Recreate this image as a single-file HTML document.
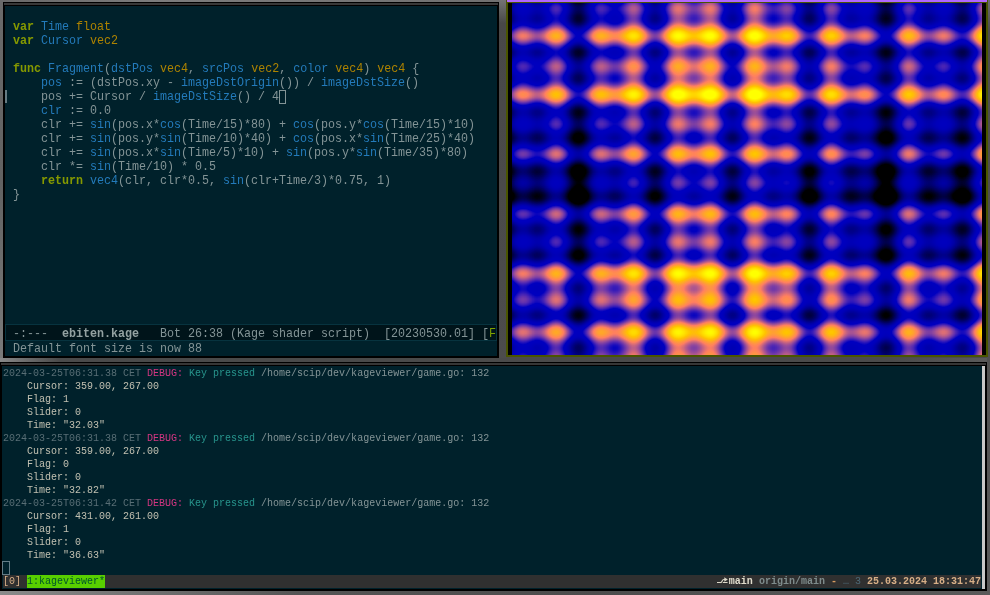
<!DOCTYPE html>
<html><head><meta charset="utf-8"><title>kageviewer</title>
<style>
html,body{margin:0;padding:0;}
body{width:990px;height:595px;overflow:hidden;position:relative;background:#4a4a4a;font-family:"Liberation Mono",monospace;}
.abs{position:absolute;}
#wall-top{left:0;top:0;width:506px;height:3px;background:linear-gradient(90deg,#686868,#7c7c7c 30%,#707070);}
#wall-left{left:0;top:0;width:4px;height:362px;background:linear-gradient(180deg,#6a6a6a,#626262 50%,#7a7a7a);}
#wall-mid{left:499px;top:0;width:7px;height:358px;background:linear-gradient(180deg,#747474,#484848 6.5%,#4c4c4c);}
#wall-gap{left:0;top:358px;width:990px;height:4px;background:linear-gradient(90deg,#888,#4a4a4a 6%,#4a4a4a 90%,#5a5a5a);}
#wall-right{left:987px;top:0;width:3px;height:595px;background:linear-gradient(180deg,#6c6c6c,#4c4c4c 5%,#505050 60%,#5a5a5a);}
#wall-bot{left:0;top:591px;width:990px;height:4px;background:linear-gradient(90deg,#8a8a8a,#555 30%,#4c4c4c 60%,#5a5a5a);}

/* editor window */
#ed{left:3px;top:2px;width:496px;height:356px;background:#000;}
#ed .stripe{left:1px;top:1px;width:494px;height:2px;background:#383838;}
#ed .body{left:2px;top:4px;width:492px;height:350px;background:#00212b;overflow:hidden;}
.code{position:absolute;left:8px;top:14px;font-size:13px;line-height:14px;transform:scaleX(0.89744);transform-origin:0 0;color:#839496;white-space:pre;}
.k{color:#859900;font-weight:bold;}
.f{color:#237bbb;}
.t{color:#ad8300;}
.fringe{left:0px;top:84px;width:2px;height:13px;background:#657b83;}
.cur{left:274px;top:84px;width:5px;height:12px;border:1px solid #839496;}
.ml{left:0;top:318px;width:490px;height:15px;background:#00141a;border:1px solid #07333f;}
.ml span.tx{position:absolute;left:7px;top:2px;font-size:13px;line-height:14px;transform:scaleX(0.89744);transform-origin:0 0;color:#839496;white-space:pre;}
.ml b{color:#93a1a1;}
.echo{left:8px;top:336px;font-size:13px;line-height:14px;transform:scaleX(0.89744);transform-origin:0 0;color:#839496;white-space:pre;}

/* viewer window */
#vw{left:506px;top:0;width:482px;height:357px;background:#4a5500;}
#vw .title{left:1px;top:0;width:480px;height:2px;background:#b266ff;}
#vw .body{left:2px;top:3px;width:478px;height:352px;background:#000;}
svg.shader{position:absolute;left:4px;top:0;display:block;}

/* terminal */
#tm{left:0;top:362px;width:987px;height:229px;background:#000;}
#tm .stripe{left:1px;top:1px;width:985px;height:2px;background:#363636;}
#tm .body{left:2px;top:4px;width:980px;height:223px;background:#00212b;overflow:hidden;}
.term,.status .l,.status .win,.status .r{opacity:0.999;}
#tm .sb{left:982px;top:4px;width:3px;height:223px;background:#c8c8c8;}
.term{position:absolute;left:1px;top:1px;font-size:10px;line-height:13px;color:#c1c0b1;white-space:pre;}
.d{color:#586e75;}
.m{color:#d33682;}
.c{color:#27958d;}
.p{color:#839496;}
.tcur{left:0px;top:195px;width:6px;height:12px;border:1px solid #647c86;}
.status{left:1px;top:209px;width:978px;height:13px;background:#303030;font-size:10px;line-height:13px;white-space:pre;color:#d7af87;}
.status .win{position:absolute;left:24px;top:0;background:#58cf00;color:#00552a;}
.status .l{position:absolute;left:0;top:0;}
.status .r{position:absolute;right:0;top:0;font-weight:bold;}
.w{color:#e0dccc;}
.g{color:#7f8c8c;}
.o{color:#d79a5f;}
.z{color:#4e6a78;font-weight:normal;}
</style></head><body>
<div class="abs" id="wall-top"></div><div class="abs" id="wall-left"></div><div class="abs" id="wall-mid"></div><div class="abs" id="wall-gap"></div><div class="abs" id="wall-right"></div><div class="abs" id="wall-bot"></div>

<div class="abs" id="ed"><div class="abs stripe"></div><div class="abs body">
<div class="code"><span class="k">var</span> <span class="f">Time</span> <span class="t">float</span>
<span class="k">var</span> <span class="f">Cursor</span> <span class="t">vec2</span>

<span class="k">func</span> <span class="f">Fragment</span>(<span class="f">dstPos</span> <span class="t">vec4</span>, <span class="f">srcPos</span> <span class="t">vec2</span>, <span class="f">color</span> <span class="t">vec4</span>) <span class="t">vec4</span> {
    <span class="f">pos</span> := (dstPos.xy - <span class="f">imageDstOrigin</span>()) / <span class="f">imageDstSize</span>()
    pos += Cursor / <span class="f">imageDstSize</span>() / 4
    <span class="f">clr</span> := 0.0
    clr += <span class="f">sin</span>(pos.x*<span class="f">cos</span>(Time/15)*80) + <span class="f">cos</span>(pos.y*<span class="f">cos</span>(Time/15)*10)
    clr += <span class="f">sin</span>(pos.y*<span class="f">sin</span>(Time/10)*40) + <span class="f">cos</span>(pos.x*<span class="f">sin</span>(Time/25)*40)
    clr += <span class="f">sin</span>(pos.x*<span class="f">sin</span>(Time/5)*10) + <span class="f">sin</span>(pos.y*<span class="f">sin</span>(Time/35)*80)
    clr *= <span class="f">sin</span>(Time/10) * 0.5
    <span class="k">return</span> <span class="f">vec4</span>(clr, clr*0.5, <span class="f">sin</span>(clr+Time/3)*0.75, 1)
}</div>
<div class="abs fringe"></div><div class="abs cur"></div>
<div class="abs ml"><span class="tx">-:---  <b>ebiten.kage</b>   Bot 26:38 (Kage shader script)  [20230530.01] [<span style="color:#7fa300">F</span></span></div>
<div class="abs echo">Default font size is now 88</div>
</div></div>

<div class="abs" id="vw"><div class="abs title"></div><div class="abs body"><svg class="shader" width="470" height="352" viewBox="0 0 470 352" shape-rendering="crispEdges"><defs><filter id="kage" x="0" y="0" width="100%" height="100%" color-interpolation-filters="sRGB"><feColorMatrix type="matrix" values="-2.69163 -2.69163 0.00000 0.00000 2.69163 -1.34581 -1.34581 0.00000 0.00000 1.34581 -0.48065 -0.48065 0.00000 0.00000 0.98065 0.00000 0.00000 0.00000 0.00000 1.00000"/><feComponentTransfer><feFuncB type="table" tableValues="0 0 0 0 0 0 0 0 0 0 0 0 0 0 0 0 0 0 0 0 0 0 0 0 0 0 0 0 0 0 0 0 0 0 0 0 0 0 0 0 0 0 0 0 0 0 0 0 0 0 0 0 0 0 0.002 0.019 0.035 0.052 0.068 0.084 0.101 0.117 0.133 0.149 0.165 0.181 0.197 0.213 0.229 0.245 0.26 0.276 0.291 0.306 0.321 0.336 0.35 0.365 0.379 0.393 0.407 0.421 0.434 0.448 0.461 0.474 0.486 0.499 0.511 0.523 0.535 0.546 0.557 0.568 0.579 0.589 0.599 0.609 0.618 0.627 0.636 0.645 0.653 0.661 0.669 0.676 0.683 0.69 0.696 0.702 0.708 0.713 0.718 0.722 0.727 0.731 0.734 0.737 0.74 0.743 0.745 0.747 0.748 0.749 0.75 0.75 0.75 0.75 0.749 0.748 0.746 0.744 0.742 0.74 0.737 0.733 0.73 0.726 0.721 0.717 0.712 0.706 0.701 0.695 0.688 0.682 0.675 0.667 0.659 0.651 0.643 0.635 0.626 0.616 0.607 0.597 0.587 0.577 0.566 0.555 0.544 0.532 0.52 0.508 0.496 0.484 0.471 0.458 0.445 0.432 0.418 0.404 0.39 0.376 0.362 0.347 0.333 0.318 0.303 0.288 0.272 0.257 0.241 0.226 0.21 0.194 0.178 0.162 0.146 0.13 0.114 0.097 0.081 0.065 0.048 0.032 0.015 0 0 0 0 0 0 0 0 0 0 0 0 0 0 0 0 0 0 0 0 0 0 0 0 0 0 0 0 0 0 0 0 0 0 0 0 0 0 0 0 0 0 0 0 0 0 0 0 0 0 0 0 0 0 0 0 0 0 0"/></feComponentTransfer></filter></defs><g filter="url(#kage)"><rect width="470" height="352" fill="#000"/><g><rect x="0" width="1" height="352" fill="#c00000"/><rect x="1" width="1" height="352" fill="#b90000"/><rect x="2" width="1" height="352" fill="#b10000"/><rect x="3" width="1" height="352" fill="#aa0000"/><rect x="4" width="1" height="352" fill="#a40000"/><rect x="5" width="1" height="352" fill="#9e0000"/><rect x="6" width="1" height="352" fill="#990000"/><rect x="7" width="1" height="352" fill="#950000"/><rect x="8" width="1" height="352" fill="#920000"/><rect x="9" width="1" height="352" fill="#900000"/><rect x="10" width="2" height="352" fill="#8f0000"/><rect x="12" width="1" height="352" fill="#900000"/><rect x="13" width="1" height="352" fill="#910000"/><rect x="14" width="1" height="352" fill="#930000"/><rect x="15" width="1" height="352" fill="#960000"/><rect x="16" width="1" height="352" fill="#990000"/><rect x="17" width="1" height="352" fill="#9d0000"/><rect x="18" width="1" height="352" fill="#a00000"/><rect x="19" width="1" height="352" fill="#a30000"/><rect x="20" width="1" height="352" fill="#a70000"/><rect x="21" width="1" height="352" fill="#a90000"/><rect x="22" width="1" height="352" fill="#ac0000"/><rect x="23" width="1" height="352" fill="#ae0000"/><rect x="24" width="2" height="352" fill="#af0000"/><rect x="26" width="1" height="352" fill="#ae0000"/><rect x="27" width="1" height="352" fill="#ad0000"/><rect x="28" width="1" height="352" fill="#aa0000"/><rect x="29" width="1" height="352" fill="#a70000"/><rect x="30" width="1" height="352" fill="#a30000"/><rect x="31" width="1" height="352" fill="#9f0000"/><rect x="32" width="1" height="352" fill="#9a0000"/><rect x="33" width="1" height="352" fill="#940000"/><rect x="34" width="1" height="352" fill="#8e0000"/><rect x="35" width="1" height="352" fill="#880000"/><rect x="36" width="1" height="352" fill="#820000"/><rect x="37" width="1" height="352" fill="#7c0000"/><rect x="38" width="1" height="352" fill="#770000"/><rect x="39" width="1" height="352" fill="#720000"/><rect x="40" width="1" height="352" fill="#6d0000"/><rect x="41" width="1" height="352" fill="#6a0000"/><rect x="42" width="1" height="352" fill="#680000"/><rect x="43" width="2" height="352" fill="#660000"/><rect x="45" width="1" height="352" fill="#670000"/><rect x="46" width="1" height="352" fill="#690000"/><rect x="47" width="1" height="352" fill="#6c0000"/><rect x="48" width="1" height="352" fill="#710000"/><rect x="49" width="1" height="352" fill="#770000"/><rect x="50" width="1" height="352" fill="#7d0000"/><rect x="51" width="1" height="352" fill="#850000"/><rect x="52" width="1" height="352" fill="#8d0000"/><rect x="53" width="1" height="352" fill="#960000"/><rect x="54" width="1" height="352" fill="#a00000"/><rect x="55" width="1" height="352" fill="#aa0000"/><rect x="56" width="1" height="352" fill="#b30000"/><rect x="57" width="1" height="352" fill="#bd0000"/><rect x="58" width="1" height="352" fill="#c60000"/><rect x="59" width="1" height="352" fill="#cf0000"/><rect x="60" width="1" height="352" fill="#d60000"/><rect x="61" width="1" height="352" fill="#dd0000"/><rect x="62" width="1" height="352" fill="#e30000"/><rect x="63" width="1" height="352" fill="#e80000"/><rect x="64" width="1" height="352" fill="#eb0000"/><rect x="65" width="1" height="352" fill="#ed0000"/><rect x="66" width="1" height="352" fill="#ee0000"/><rect x="67" width="1" height="352" fill="#ed0000"/><rect x="68" width="1" height="352" fill="#eb0000"/><rect x="69" width="1" height="352" fill="#e70000"/><rect x="70" width="1" height="352" fill="#e20000"/><rect x="71" width="1" height="352" fill="#dc0000"/><rect x="72" width="1" height="352" fill="#d50000"/><rect x="73" width="1" height="352" fill="#cd0000"/><rect x="74" width="1" height="352" fill="#c50000"/><rect x="75" width="1" height="352" fill="#bc0000"/><rect x="76" width="1" height="352" fill="#b30000"/><rect x="77" width="1" height="352" fill="#a90000"/><rect x="78" width="1" height="352" fill="#a00000"/><rect x="79" width="1" height="352" fill="#970000"/><rect x="80" width="1" height="352" fill="#8e0000"/><rect x="81" width="1" height="352" fill="#860000"/><rect x="82" width="1" height="352" fill="#7f0000"/><rect x="83" width="1" height="352" fill="#790000"/><rect x="84" width="1" height="352" fill="#730000"/><rect x="85" width="1" height="352" fill="#6f0000"/><rect x="86" width="1" height="352" fill="#6b0000"/><rect x="87" width="1" height="352" fill="#690000"/><rect x="88" width="3" height="352" fill="#670000"/><rect x="91" width="1" height="352" fill="#690000"/><rect x="92" width="1" height="352" fill="#6b0000"/><rect x="93" width="1" height="352" fill="#6d0000"/><rect x="94" width="1" height="352" fill="#700000"/><rect x="95" width="1" height="352" fill="#730000"/><rect x="96" width="1" height="352" fill="#760000"/><rect x="97" width="1" height="352" fill="#7a0000"/><rect x="98" width="1" height="352" fill="#7d0000"/><rect x="99" width="1" height="352" fill="#7f0000"/><rect x="100" width="1" height="352" fill="#810000"/><rect x="101" width="3" height="352" fill="#830000"/><rect x="104" width="1" height="352" fill="#820000"/><rect x="105" width="1" height="352" fill="#810000"/><rect x="106" width="1" height="352" fill="#7e0000"/><rect x="107" width="1" height="352" fill="#7b0000"/><rect x="108" width="1" height="352" fill="#770000"/><rect x="109" width="1" height="352" fill="#720000"/><rect x="110" width="1" height="352" fill="#6d0000"/><rect x="111" width="1" height="352" fill="#680000"/><rect x="112" width="1" height="352" fill="#620000"/><rect x="113" width="1" height="352" fill="#5d0000"/><rect x="114" width="1" height="352" fill="#570000"/><rect x="115" width="1" height="352" fill="#520000"/><rect x="116" width="1" height="352" fill="#4d0000"/><rect x="117" width="1" height="352" fill="#480000"/><rect x="118" width="1" height="352" fill="#450000"/><rect x="119" width="1" height="352" fill="#420000"/><rect x="120" width="3" height="352" fill="#400000"/><rect x="123" width="1" height="352" fill="#420000"/><rect x="124" width="1" height="352" fill="#450000"/><rect x="125" width="1" height="352" fill="#490000"/><rect x="126" width="1" height="352" fill="#4e0000"/><rect x="127" width="1" height="352" fill="#540000"/><rect x="128" width="1" height="352" fill="#5b0000"/><rect x="129" width="1" height="352" fill="#630000"/><rect x="130" width="1" height="352" fill="#6b0000"/><rect x="131" width="1" height="352" fill="#740000"/><rect x="132" width="1" height="352" fill="#7d0000"/><rect x="133" width="1" height="352" fill="#860000"/><rect x="134" width="1" height="352" fill="#8f0000"/><rect x="135" width="1" height="352" fill="#980000"/><rect x="136" width="1" height="352" fill="#a00000"/><rect x="137" width="1" height="352" fill="#a70000"/><rect x="138" width="1" height="352" fill="#ad0000"/><rect x="139" width="1" height="352" fill="#b30000"/><rect x="140" width="1" height="352" fill="#b70000"/><rect x="141" width="1" height="352" fill="#ba0000"/><rect x="142" width="2" height="352" fill="#bc0000"/><rect x="144" width="1" height="352" fill="#bb0000"/><rect x="145" width="1" height="352" fill="#b80000"/><rect x="146" width="1" height="352" fill="#b40000"/><rect x="147" width="1" height="352" fill="#af0000"/><rect x="148" width="1" height="352" fill="#a90000"/><rect x="149" width="1" height="352" fill="#a10000"/><rect x="150" width="1" height="352" fill="#990000"/><rect x="151" width="1" height="352" fill="#900000"/><rect x="152" width="1" height="352" fill="#870000"/><rect x="153" width="1" height="352" fill="#7d0000"/><rect x="154" width="1" height="352" fill="#730000"/><rect x="155" width="1" height="352" fill="#690000"/><rect x="156" width="1" height="352" fill="#5f0000"/><rect x="157" width="1" height="352" fill="#560000"/><rect x="158" width="1" height="352" fill="#4e0000"/><rect x="159" width="1" height="352" fill="#460000"/><rect x="160" width="1" height="352" fill="#3f0000"/><rect x="161" width="1" height="352" fill="#390000"/><rect x="162" width="1" height="352" fill="#340000"/><rect x="163" width="1" height="352" fill="#310000"/><rect x="164" width="1" height="352" fill="#2e0000"/><rect x="165" width="1" height="352" fill="#2d0000"/><rect x="166" width="1" height="352" fill="#2c0000"/><rect x="167" width="1" height="352" fill="#2d0000"/><rect x="168" width="1" height="352" fill="#2e0000"/><rect x="169" width="1" height="352" fill="#310000"/><rect x="170" width="1" height="352" fill="#340000"/><rect x="171" width="1" height="352" fill="#370000"/><rect x="172" width="1" height="352" fill="#3b0000"/><rect x="173" width="1" height="352" fill="#400000"/><rect x="174" width="1" height="352" fill="#440000"/><rect x="175" width="1" height="352" fill="#480000"/><rect x="176" width="1" height="352" fill="#4c0000"/><rect x="177" width="1" height="352" fill="#4f0000"/><rect x="178" width="1" height="352" fill="#520000"/><rect x="179" width="1" height="352" fill="#550000"/><rect x="180" width="1" height="352" fill="#560000"/><rect x="181" width="2" height="352" fill="#570000"/><rect x="183" width="1" height="352" fill="#560000"/><rect x="184" width="1" height="352" fill="#550000"/><rect x="185" width="1" height="352" fill="#520000"/><rect x="186" width="1" height="352" fill="#4f0000"/><rect x="187" width="1" height="352" fill="#4c0000"/><rect x="188" width="1" height="352" fill="#480000"/><rect x="189" width="1" height="352" fill="#440000"/><rect x="190" width="1" height="352" fill="#3f0000"/><rect x="191" width="1" height="352" fill="#3b0000"/><rect x="192" width="1" height="352" fill="#370000"/><rect x="193" width="1" height="352" fill="#330000"/><rect x="194" width="1" height="352" fill="#300000"/><rect x="195" width="1" height="352" fill="#2d0000"/><rect x="196" width="1" height="352" fill="#2b0000"/><rect x="197" width="1" height="352" fill="#2a0000"/><rect x="198" width="1" height="352" fill="#290000"/><rect x="199" width="1" height="352" fill="#2a0000"/><rect x="200" width="1" height="352" fill="#2c0000"/><rect x="201" width="1" height="352" fill="#2f0000"/><rect x="202" width="1" height="352" fill="#340000"/><rect x="203" width="1" height="352" fill="#390000"/><rect x="204" width="1" height="352" fill="#3f0000"/><rect x="205" width="1" height="352" fill="#460000"/><rect x="206" width="1" height="352" fill="#4e0000"/><rect x="207" width="1" height="352" fill="#570000"/><rect x="208" width="1" height="352" fill="#600000"/><rect x="209" width="1" height="352" fill="#690000"/><rect x="210" width="1" height="352" fill="#720000"/><rect x="211" width="1" height="352" fill="#7b0000"/><rect x="212" width="1" height="352" fill="#840000"/><rect x="213" width="1" height="352" fill="#8d0000"/><rect x="214" width="1" height="352" fill="#940000"/><rect x="215" width="1" height="352" fill="#9b0000"/><rect x="216" width="1" height="352" fill="#a10000"/><rect x="217" width="1" height="352" fill="#a60000"/><rect x="218" width="1" height="352" fill="#a90000"/><rect x="219" width="1" height="352" fill="#ab0000"/><rect x="220" width="1" height="352" fill="#ac0000"/><rect x="221" width="1" height="352" fill="#ab0000"/><rect x="222" width="1" height="352" fill="#a90000"/><rect x="223" width="1" height="352" fill="#a60000"/><rect x="224" width="1" height="352" fill="#a10000"/><rect x="225" width="1" height="352" fill="#9b0000"/><rect x="226" width="1" height="352" fill="#940000"/><rect x="227" width="1" height="352" fill="#8c0000"/><rect x="228" width="1" height="352" fill="#840000"/><rect x="229" width="1" height="352" fill="#7b0000"/><rect x="230" width="1" height="352" fill="#710000"/><rect x="231" width="1" height="352" fill="#680000"/><rect x="232" width="1" height="352" fill="#5e0000"/><rect x="233" width="1" height="352" fill="#550000"/><rect x="234" width="1" height="352" fill="#4c0000"/><rect x="235" width="1" height="352" fill="#440000"/><rect x="236" width="1" height="352" fill="#3c0000"/><rect x="237" width="1" height="352" fill="#360000"/><rect x="238" width="1" height="352" fill="#300000"/><rect x="239" width="1" height="352" fill="#2c0000"/><rect x="240" width="1" height="352" fill="#290000"/><rect x="241" width="1" height="352" fill="#270000"/><rect x="242" width="2" height="352" fill="#260000"/><rect x="244" width="1" height="352" fill="#280000"/><rect x="245" width="1" height="352" fill="#2a0000"/><rect x="246" width="1" height="352" fill="#2e0000"/><rect x="247" width="1" height="352" fill="#320000"/><rect x="248" width="1" height="352" fill="#370000"/><rect x="249" width="1" height="352" fill="#3c0000"/><rect x="250" width="1" height="352" fill="#420000"/><rect x="251" width="1" height="352" fill="#480000"/><rect x="252" width="1" height="352" fill="#4e0000"/><rect x="253" width="1" height="352" fill="#530000"/><rect x="254" width="1" height="352" fill="#590000"/><rect x="255" width="1" height="352" fill="#5e0000"/><rect x="256" width="1" height="352" fill="#620000"/><rect x="257" width="1" height="352" fill="#650000"/><rect x="258" width="1" height="352" fill="#680000"/><rect x="259" width="1" height="352" fill="#6a0000"/><rect x="260" width="3" height="352" fill="#6c0000"/><rect x="263" width="1" height="352" fill="#6a0000"/><rect x="264" width="1" height="352" fill="#690000"/><rect x="265" width="1" height="352" fill="#660000"/><rect x="266" width="1" height="352" fill="#640000"/><rect x="267" width="1" height="352" fill="#610000"/><rect x="268" width="1" height="352" fill="#5e0000"/><rect x="269" width="1" height="352" fill="#5b0000"/><rect x="270" width="1" height="352" fill="#580000"/><rect x="271" width="1" height="352" fill="#550000"/><rect x="272" width="1" height="352" fill="#530000"/><rect x="273" width="1" height="352" fill="#520000"/><rect x="274" width="1" height="352" fill="#510000"/><rect x="275" width="1" height="352" fill="#520000"/><rect x="276" width="1" height="352" fill="#530000"/><rect x="277" width="1" height="352" fill="#550000"/><rect x="278" width="1" height="352" fill="#580000"/><rect x="279" width="1" height="352" fill="#5c0000"/><rect x="280" width="1" height="352" fill="#620000"/><rect x="281" width="1" height="352" fill="#680000"/><rect x="282" width="1" height="352" fill="#6f0000"/><rect x="283" width="1" height="352" fill="#760000"/><rect x="284" width="1" height="352" fill="#7f0000"/><rect x="285" width="1" height="352" fill="#880000"/><rect x="286" width="1" height="352" fill="#910000"/><rect x="287" width="1" height="352" fill="#9a0000"/><rect x="288" width="1" height="352" fill="#a30000"/><rect x="289" width="1" height="352" fill="#ac0000"/><rect x="290" width="1" height="352" fill="#b40000"/><rect x="291" width="1" height="352" fill="#bc0000"/><rect x="292" width="1" height="352" fill="#c30000"/><rect x="293" width="1" height="352" fill="#c90000"/><rect x="294" width="1" height="352" fill="#ce0000"/><rect x="295" width="1" height="352" fill="#d10000"/><rect x="296" width="1" height="352" fill="#d30000"/><rect x="297" width="2" height="352" fill="#d40000"/><rect x="299" width="1" height="352" fill="#d20000"/><rect x="300" width="1" height="352" fill="#cf0000"/><rect x="301" width="1" height="352" fill="#ca0000"/><rect x="302" width="1" height="352" fill="#c40000"/><rect x="303" width="1" height="352" fill="#be0000"/><rect x="304" width="1" height="352" fill="#b60000"/><rect x="305" width="1" height="352" fill="#ae0000"/><rect x="306" width="1" height="352" fill="#a40000"/><rect x="307" width="1" height="352" fill="#9b0000"/><rect x="308" width="1" height="352" fill="#910000"/><rect x="309" width="1" height="352" fill="#880000"/><rect x="310" width="1" height="352" fill="#7f0000"/><rect x="311" width="1" height="352" fill="#760000"/><rect x="312" width="1" height="352" fill="#6d0000"/><rect x="313" width="1" height="352" fill="#660000"/><rect x="314" width="1" height="352" fill="#5f0000"/><rect x="315" width="1" height="352" fill="#5a0000"/><rect x="316" width="1" height="352" fill="#550000"/><rect x="317" width="1" height="352" fill="#520000"/><rect x="318" width="3" height="352" fill="#500000"/><rect x="321" width="1" height="352" fill="#520000"/><rect x="322" width="1" height="352" fill="#550000"/><rect x="323" width="1" height="352" fill="#590000"/><rect x="324" width="1" height="352" fill="#5d0000"/><rect x="325" width="1" height="352" fill="#630000"/><rect x="326" width="1" height="352" fill="#690000"/><rect x="327" width="1" height="352" fill="#6f0000"/><rect x="328" width="1" height="352" fill="#760000"/><rect x="329" width="1" height="352" fill="#7d0000"/><rect x="330" width="1" height="352" fill="#830000"/><rect x="331" width="1" height="352" fill="#8a0000"/><rect x="332" width="1" height="352" fill="#900000"/><rect x="333" width="1" height="352" fill="#950000"/><rect x="334" width="1" height="352" fill="#9a0000"/><rect x="335" width="1" height="352" fill="#9e0000"/><rect x="336" width="1" height="352" fill="#a10000"/><rect x="337" width="1" height="352" fill="#a30000"/><rect x="338" width="3" height="352" fill="#a50000"/><rect x="341" width="1" height="352" fill="#a40000"/><rect x="342" width="1" height="352" fill="#a20000"/><rect x="343" width="1" height="352" fill="#a00000"/><rect x="344" width="1" height="352" fill="#9e0000"/><rect x="345" width="1" height="352" fill="#9b0000"/><rect x="346" width="1" height="352" fill="#980000"/><rect x="347" width="1" height="352" fill="#950000"/><rect x="348" width="1" height="352" fill="#920000"/><rect x="349" width="1" height="352" fill="#900000"/><rect x="350" width="1" height="352" fill="#8e0000"/><rect x="351" width="1" height="352" fill="#8d0000"/><rect x="352" width="1" height="352" fill="#8c0000"/><rect x="353" width="1" height="352" fill="#8d0000"/><rect x="354" width="1" height="352" fill="#8e0000"/><rect x="355" width="1" height="352" fill="#900000"/><rect x="356" width="1" height="352" fill="#930000"/><rect x="357" width="1" height="352" fill="#970000"/><rect x="358" width="1" height="352" fill="#9c0000"/><rect x="359" width="1" height="352" fill="#a20000"/><rect x="360" width="1" height="352" fill="#a80000"/><rect x="361" width="1" height="352" fill="#af0000"/><rect x="362" width="1" height="352" fill="#b70000"/><rect x="363" width="1" height="352" fill="#be0000"/><rect x="364" width="1" height="352" fill="#c60000"/><rect x="365" width="1" height="352" fill="#ce0000"/><rect x="366" width="1" height="352" fill="#d60000"/><rect x="367" width="1" height="352" fill="#dd0000"/><rect x="368" width="1" height="352" fill="#e40000"/><rect x="369" width="1" height="352" fill="#ea0000"/><rect x="370" width="1" height="352" fill="#ef0000"/><rect x="371" width="1" height="352" fill="#f20000"/><rect x="372" width="1" height="352" fill="#f50000"/><rect x="373" width="2" height="352" fill="#f70000"/><rect x="375" width="1" height="352" fill="#f50000"/><rect x="376" width="1" height="352" fill="#f30000"/><rect x="377" width="1" height="352" fill="#ef0000"/><rect x="378" width="1" height="352" fill="#e90000"/><rect x="379" width="1" height="352" fill="#e30000"/><rect x="380" width="1" height="352" fill="#db0000"/><rect x="381" width="1" height="352" fill="#d30000"/><rect x="382" width="1" height="352" fill="#ca0000"/><rect x="383" width="1" height="352" fill="#c00000"/><rect x="384" width="1" height="352" fill="#b60000"/><rect x="385" width="1" height="352" fill="#ab0000"/><rect x="386" width="1" height="352" fill="#a10000"/><rect x="387" width="1" height="352" fill="#970000"/><rect x="388" width="1" height="352" fill="#8d0000"/><rect x="389" width="1" height="352" fill="#840000"/><rect x="390" width="1" height="352" fill="#7b0000"/><rect x="391" width="1" height="352" fill="#740000"/><rect x="392" width="1" height="352" fill="#6d0000"/><rect x="393" width="1" height="352" fill="#680000"/><rect x="394" width="1" height="352" fill="#640000"/><rect x="395" width="1" height="352" fill="#610000"/><rect x="396" width="2" height="352" fill="#600000"/><rect x="398" width="1" height="352" fill="#610000"/><rect x="399" width="1" height="352" fill="#640000"/><rect x="400" width="1" height="352" fill="#670000"/><rect x="401" width="1" height="352" fill="#6b0000"/><rect x="402" width="1" height="352" fill="#710000"/><rect x="403" width="1" height="352" fill="#770000"/><rect x="404" width="1" height="352" fill="#7d0000"/><rect x="405" width="1" height="352" fill="#840000"/><rect x="406" width="1" height="352" fill="#8a0000"/><rect x="407" width="1" height="352" fill="#910000"/><rect x="408" width="1" height="352" fill="#980000"/><rect x="409" width="1" height="352" fill="#9e0000"/><rect x="410" width="1" height="352" fill="#a40000"/><rect x="411" width="1" height="352" fill="#a80000"/><rect x="412" width="1" height="352" fill="#ad0000"/><rect x="413" width="1" height="352" fill="#b00000"/><rect x="414" width="1" height="352" fill="#b30000"/><rect x="415" width="1" height="352" fill="#b40000"/><rect x="416" width="2" height="352" fill="#b50000"/><rect x="418" width="1" height="352" fill="#b30000"/><rect x="419" width="1" height="352" fill="#b20000"/><rect x="420" width="1" height="352" fill="#af0000"/><rect x="421" width="1" height="352" fill="#ac0000"/><rect x="422" width="1" height="352" fill="#a90000"/><rect x="423" width="1" height="352" fill="#a50000"/><rect x="424" width="1" height="352" fill="#a10000"/><rect x="425" width="1" height="352" fill="#9e0000"/><rect x="426" width="1" height="352" fill="#9a0000"/><rect x="427" width="1" height="352" fill="#970000"/><rect x="428" width="1" height="352" fill="#950000"/><rect x="429" width="1" height="352" fill="#930000"/><rect x="430" width="3" height="352" fill="#910000"/><rect x="433" width="1" height="352" fill="#930000"/><rect x="434" width="1" height="352" fill="#950000"/><rect x="435" width="1" height="352" fill="#980000"/><rect x="436" width="1" height="352" fill="#9c0000"/><rect x="437" width="1" height="352" fill="#a00000"/><rect x="438" width="1" height="352" fill="#a50000"/><rect x="439" width="1" height="352" fill="#ab0000"/><rect x="440" width="1" height="352" fill="#b10000"/><rect x="441" width="1" height="352" fill="#b70000"/><rect x="442" width="1" height="352" fill="#bd0000"/><rect x="443" width="1" height="352" fill="#c40000"/><rect x="444" width="1" height="352" fill="#c90000"/><rect x="445" width="1" height="352" fill="#ce0000"/><rect x="446" width="1" height="352" fill="#d30000"/><rect x="447" width="1" height="352" fill="#d70000"/><rect x="448" width="1" height="352" fill="#d90000"/><rect x="449" width="2" height="352" fill="#db0000"/><rect x="451" width="1" height="352" fill="#da0000"/><rect x="452" width="1" height="352" fill="#d80000"/><rect x="453" width="1" height="352" fill="#d50000"/><rect x="454" width="1" height="352" fill="#d00000"/><rect x="455" width="1" height="352" fill="#ca0000"/><rect x="456" width="1" height="352" fill="#c30000"/><rect x="457" width="1" height="352" fill="#ba0000"/><rect x="458" width="1" height="352" fill="#b10000"/><rect x="459" width="1" height="352" fill="#a70000"/><rect x="460" width="1" height="352" fill="#9d0000"/><rect x="461" width="1" height="352" fill="#920000"/><rect x="462" width="1" height="352" fill="#870000"/><rect x="463" width="1" height="352" fill="#7c0000"/><rect x="464" width="1" height="352" fill="#710000"/><rect x="465" width="1" height="352" fill="#660000"/><rect x="466" width="1" height="352" fill="#5c0000"/><rect x="467" width="1" height="352" fill="#530000"/><rect x="468" width="1" height="352" fill="#4b0000"/><rect x="469" width="1" height="352" fill="#440000"/></g><g style="mix-blend-mode:screen"><rect y="0" height="1" width="470" fill="#009300"/><rect y="1" height="1" width="470" fill="#008c00"/><rect y="2" height="1" width="470" fill="#008600"/><rect y="3" height="1" width="470" fill="#008100"/><rect y="4" height="1" width="470" fill="#007e00"/><rect y="5" height="2" width="470" fill="#007d00"/><rect y="7" height="1" width="470" fill="#007e00"/><rect y="8" height="1" width="470" fill="#008100"/><rect y="9" height="1" width="470" fill="#008400"/><rect y="10" height="1" width="470" fill="#008700"/><rect y="11" height="1" width="470" fill="#008b00"/><rect y="12" height="1" width="470" fill="#008f00"/><rect y="13" height="1" width="470" fill="#009100"/><rect y="14" height="1" width="470" fill="#009300"/><rect y="15" height="1" width="470" fill="#009400"/><rect y="16" height="1" width="470" fill="#009300"/><rect y="17" height="1" width="470" fill="#009100"/><rect y="18" height="1" width="470" fill="#008d00"/><rect y="19" height="1" width="470" fill="#008700"/><rect y="20" height="1" width="470" fill="#007f00"/><rect y="21" height="1" width="470" fill="#007700"/><rect y="22" height="1" width="470" fill="#006c00"/><rect y="23" height="1" width="470" fill="#006100"/><rect y="24" height="1" width="470" fill="#005600"/><rect y="25" height="1" width="470" fill="#004a00"/><rect y="26" height="1" width="470" fill="#003f00"/><rect y="27" height="1" width="470" fill="#003400"/><rect y="28" height="1" width="470" fill="#002a00"/><rect y="29" height="1" width="470" fill="#002200"/><rect y="30" height="1" width="470" fill="#001c00"/><rect y="31" height="1" width="470" fill="#001700"/><rect y="32" height="2" width="470" fill="#001500"/><rect y="34" height="1" width="470" fill="#001800"/><rect y="35" height="1" width="470" fill="#001d00"/><rect y="36" height="1" width="470" fill="#002400"/><rect y="37" height="1" width="470" fill="#002d00"/><rect y="38" height="1" width="470" fill="#003700"/><rect y="39" height="1" width="470" fill="#004200"/><rect y="40" height="1" width="470" fill="#004e00"/><rect y="41" height="1" width="470" fill="#005a00"/><rect y="42" height="1" width="470" fill="#006700"/><rect y="43" height="1" width="470" fill="#007200"/><rect y="44" height="1" width="470" fill="#007c00"/><rect y="45" height="1" width="470" fill="#008500"/><rect y="46" height="1" width="470" fill="#008d00"/><rect y="47" height="1" width="470" fill="#009200"/><rect y="48" height="1" width="470" fill="#009600"/><rect y="49" height="1" width="470" fill="#009700"/><rect y="50" height="1" width="470" fill="#009600"/><rect y="51" height="1" width="470" fill="#009400"/><rect y="52" height="1" width="470" fill="#009000"/><rect y="53" height="1" width="470" fill="#008a00"/><rect y="54" height="1" width="470" fill="#008300"/><rect y="55" height="1" width="470" fill="#007c00"/><rect y="56" height="1" width="470" fill="#007500"/><rect y="57" height="1" width="470" fill="#006d00"/><rect y="58" height="1" width="470" fill="#006600"/><rect y="59" height="1" width="470" fill="#006000"/><rect y="60" height="1" width="470" fill="#005b00"/><rect y="61" height="1" width="470" fill="#005700"/><rect y="62" height="1" width="470" fill="#005400"/><rect y="63" height="1" width="470" fill="#005300"/><rect y="64" height="1" width="470" fill="#005400"/><rect y="65" height="1" width="470" fill="#005600"/><rect y="66" height="1" width="470" fill="#005900"/><rect y="67" height="1" width="470" fill="#005d00"/><rect y="68" height="1" width="470" fill="#006200"/><rect y="69" height="1" width="470" fill="#006800"/><rect y="70" height="1" width="470" fill="#006d00"/><rect y="71" height="1" width="470" fill="#007200"/><rect y="72" height="1" width="470" fill="#007700"/><rect y="73" height="1" width="470" fill="#007a00"/><rect y="74" height="2" width="470" fill="#007c00"/><rect y="76" height="1" width="470" fill="#007b00"/><rect y="77" height="1" width="470" fill="#007800"/><rect y="78" height="1" width="470" fill="#007300"/><rect y="79" height="1" width="470" fill="#006c00"/><rect y="80" height="1" width="470" fill="#006400"/><rect y="81" height="1" width="470" fill="#005b00"/><rect y="82" height="1" width="470" fill="#005000"/><rect y="83" height="1" width="470" fill="#004500"/><rect y="84" height="1" width="470" fill="#003a00"/><rect y="85" height="1" width="470" fill="#002f00"/><rect y="86" height="1" width="470" fill="#002500"/><rect y="87" height="1" width="470" fill="#001c00"/><rect y="88" height="1" width="470" fill="#001400"/><rect y="89" height="1" width="470" fill="#000e00"/><rect y="90" height="1" width="470" fill="#000a00"/><rect y="91" height="1" width="470" fill="#000900"/><rect y="92" height="1" width="470" fill="#000a00"/><rect y="93" height="1" width="470" fill="#000d00"/><rect y="94" height="1" width="470" fill="#001200"/><rect y="95" height="1" width="470" fill="#001a00"/><rect y="96" height="1" width="470" fill="#002400"/><rect y="97" height="1" width="470" fill="#002f00"/><rect y="98" height="1" width="470" fill="#003b00"/><rect y="99" height="1" width="470" fill="#004800"/><rect y="100" height="1" width="470" fill="#005500"/><rect y="101" height="1" width="470" fill="#006300"/><rect y="102" height="1" width="470" fill="#006f00"/><rect y="103" height="1" width="470" fill="#007b00"/><rect y="104" height="1" width="470" fill="#008600"/><rect y="105" height="1" width="470" fill="#008e00"/><rect y="106" height="1" width="470" fill="#009600"/><rect y="107" height="1" width="470" fill="#009b00"/><rect y="108" height="1" width="470" fill="#009e00"/><rect y="109" height="2" width="470" fill="#009f00"/><rect y="111" height="1" width="470" fill="#009d00"/><rect y="112" height="1" width="470" fill="#009a00"/><rect y="113" height="1" width="470" fill="#009500"/><rect y="114" height="1" width="470" fill="#009100"/><rect y="115" height="1" width="470" fill="#008b00"/><rect y="116" height="1" width="470" fill="#008600"/><rect y="117" height="1" width="470" fill="#008200"/><rect y="118" height="1" width="470" fill="#007e00"/><rect y="119" height="1" width="470" fill="#007c00"/><rect y="120" height="2" width="470" fill="#007a00"/><rect y="122" height="1" width="470" fill="#007c00"/><rect y="123" height="1" width="470" fill="#007f00"/><rect y="124" height="1" width="470" fill="#008300"/><rect y="125" height="1" width="470" fill="#008900"/><rect y="126" height="1" width="470" fill="#008f00"/><rect y="127" height="1" width="470" fill="#009600"/><rect y="128" height="1" width="470" fill="#009e00"/><rect y="129" height="1" width="470" fill="#00a500"/><rect y="130" height="1" width="470" fill="#00ac00"/><rect y="131" height="1" width="470" fill="#00b200"/><rect y="132" height="1" width="470" fill="#00b600"/><rect y="133" height="1" width="470" fill="#00b900"/><rect y="134" height="2" width="470" fill="#00bb00"/><rect y="136" height="1" width="470" fill="#00b800"/><rect y="137" height="1" width="470" fill="#00b400"/><rect y="138" height="1" width="470" fill="#00ae00"/><rect y="139" height="1" width="470" fill="#00a600"/><rect y="140" height="1" width="470" fill="#009d00"/><rect y="141" height="1" width="470" fill="#009200"/><rect y="142" height="1" width="470" fill="#008700"/><rect y="143" height="1" width="470" fill="#007c00"/><rect y="144" height="1" width="470" fill="#007000"/><rect y="145" height="1" width="470" fill="#006600"/><rect y="146" height="1" width="470" fill="#005c00"/><rect y="147" height="1" width="470" fill="#005300"/><rect y="148" height="1" width="470" fill="#004d00"/><rect y="149" height="1" width="470" fill="#004800"/><rect y="150" height="2" width="470" fill="#004600"/><rect y="152" height="1" width="470" fill="#004800"/><rect y="153" height="1" width="470" fill="#004d00"/><rect y="154" height="1" width="470" fill="#005300"/><rect y="155" height="1" width="470" fill="#005c00"/><rect y="156" height="1" width="470" fill="#006600"/><rect y="157" height="1" width="470" fill="#007100"/><rect y="158" height="1" width="470" fill="#007d00"/><rect y="159" height="1" width="470" fill="#008a00"/><rect y="160" height="1" width="470" fill="#009600"/><rect y="161" height="1" width="470" fill="#00a200"/><rect y="162" height="1" width="470" fill="#00ad00"/><rect y="163" height="1" width="470" fill="#00b600"/><rect y="164" height="1" width="470" fill="#00bf00"/><rect y="165" height="1" width="470" fill="#00c500"/><rect y="166" height="1" width="470" fill="#00ca00"/><rect y="167" height="1" width="470" fill="#00cc00"/><rect y="168" height="2" width="470" fill="#00cd00"/><rect y="170" height="1" width="470" fill="#00ca00"/><rect y="171" height="1" width="470" fill="#00c700"/><rect y="172" height="1" width="470" fill="#00c200"/><rect y="173" height="1" width="470" fill="#00be00"/><rect y="174" height="1" width="470" fill="#00b800"/><rect y="175" height="1" width="470" fill="#00b400"/><rect y="176" height="1" width="470" fill="#00af00"/><rect y="177" height="1" width="470" fill="#00ac00"/><rect y="178" height="1" width="470" fill="#00a900"/><rect y="179" height="2" width="470" fill="#00a800"/><rect y="181" height="1" width="470" fill="#00aa00"/><rect y="182" height="1" width="470" fill="#00ad00"/><rect y="183" height="1" width="470" fill="#00b200"/><rect y="184" height="1" width="470" fill="#00b700"/><rect y="185" height="1" width="470" fill="#00be00"/><rect y="186" height="1" width="470" fill="#00c400"/><rect y="187" height="1" width="470" fill="#00cc00"/><rect y="188" height="1" width="470" fill="#00d200"/><rect y="189" height="1" width="470" fill="#00d900"/><rect y="190" height="1" width="470" fill="#00de00"/><rect y="191" height="1" width="470" fill="#00e200"/><rect y="192" height="1" width="470" fill="#00e400"/><rect y="193" height="1" width="470" fill="#00e500"/><rect y="194" height="1" width="470" fill="#00e300"/><rect y="195" height="1" width="470" fill="#00e000"/><rect y="196" height="1" width="470" fill="#00da00"/><rect y="197" height="1" width="470" fill="#00d300"/><rect y="198" height="1" width="470" fill="#00c900"/><rect y="199" height="1" width="470" fill="#00be00"/><rect y="200" height="1" width="470" fill="#00b200"/><rect y="201" height="1" width="470" fill="#00a500"/><rect y="202" height="1" width="470" fill="#009700"/><rect y="203" height="1" width="470" fill="#008a00"/><rect y="204" height="1" width="470" fill="#007d00"/><rect y="205" height="1" width="470" fill="#007000"/><rect y="206" height="1" width="470" fill="#006600"/><rect y="207" height="1" width="470" fill="#005c00"/><rect y="208" height="1" width="470" fill="#005500"/><rect y="209" height="1" width="470" fill="#005000"/><rect y="210" height="2" width="470" fill="#004d00"/><rect y="212" height="1" width="470" fill="#004f00"/><rect y="213" height="1" width="470" fill="#005300"/><rect y="214" height="1" width="470" fill="#005800"/><rect y="215" height="1" width="470" fill="#006000"/><rect y="216" height="1" width="470" fill="#006800"/><rect y="217" height="1" width="470" fill="#007200"/><rect y="218" height="1" width="470" fill="#007b00"/><rect y="219" height="1" width="470" fill="#008500"/><rect y="220" height="1" width="470" fill="#008e00"/><rect y="221" height="1" width="470" fill="#009700"/><rect y="222" height="1" width="470" fill="#009e00"/><rect y="223" height="1" width="470" fill="#00a400"/><rect y="224" height="1" width="470" fill="#00a900"/><rect y="225" height="1" width="470" fill="#00ab00"/><rect y="226" height="1" width="470" fill="#00ac00"/><rect y="227" height="1" width="470" fill="#00ab00"/><rect y="228" height="1" width="470" fill="#00a900"/><rect y="229" height="1" width="470" fill="#00a500"/><rect y="230" height="1" width="470" fill="#00a100"/><rect y="231" height="1" width="470" fill="#009b00"/><rect y="232" height="1" width="470" fill="#009500"/><rect y="233" height="1" width="470" fill="#008f00"/><rect y="234" height="1" width="470" fill="#008900"/><rect y="235" height="1" width="470" fill="#008400"/><rect y="236" height="1" width="470" fill="#008000"/><rect y="237" height="1" width="470" fill="#007d00"/><rect y="238" height="2" width="470" fill="#007c00"/><rect y="240" height="1" width="470" fill="#007e00"/><rect y="241" height="1" width="470" fill="#008100"/><rect y="242" height="1" width="470" fill="#008500"/><rect y="243" height="1" width="470" fill="#008b00"/><rect y="244" height="1" width="470" fill="#009100"/><rect y="245" height="1" width="470" fill="#009800"/><rect y="246" height="1" width="470" fill="#00a000"/><rect y="247" height="1" width="470" fill="#00a700"/><rect y="248" height="1" width="470" fill="#00ad00"/><rect y="249" height="1" width="470" fill="#00b200"/><rect y="250" height="1" width="470" fill="#00b600"/><rect y="251" height="2" width="470" fill="#00b900"/><rect y="253" height="1" width="470" fill="#00b700"/><rect y="254" height="1" width="470" fill="#00b300"/><rect y="255" height="1" width="470" fill="#00ad00"/><rect y="256" height="1" width="470" fill="#00a500"/><rect y="257" height="1" width="470" fill="#009b00"/><rect y="258" height="1" width="470" fill="#009000"/><rect y="259" height="1" width="470" fill="#008300"/><rect y="260" height="1" width="470" fill="#007500"/><rect y="261" height="1" width="470" fill="#006700"/><rect y="262" height="1" width="470" fill="#005900"/><rect y="263" height="1" width="470" fill="#004b00"/><rect y="264" height="1" width="470" fill="#003e00"/><rect y="265" height="1" width="470" fill="#003200"/><rect y="266" height="1" width="470" fill="#002800"/><rect y="267" height="1" width="470" fill="#002000"/><rect y="268" height="1" width="470" fill="#001a00"/><rect y="269" height="1" width="470" fill="#001600"/><rect y="270" height="1" width="470" fill="#001400"/><rect y="271" height="1" width="470" fill="#001500"/><rect y="272" height="1" width="470" fill="#001800"/><rect y="273" height="1" width="470" fill="#001d00"/><rect y="274" height="1" width="470" fill="#002300"/><rect y="275" height="1" width="470" fill="#002b00"/><rect y="276" height="1" width="470" fill="#003300"/><rect y="277" height="1" width="470" fill="#003c00"/><rect y="278" height="1" width="470" fill="#004500"/><rect y="279" height="1" width="470" fill="#004d00"/><rect y="280" height="1" width="470" fill="#005500"/><rect y="281" height="1" width="470" fill="#005c00"/><rect y="282" height="1" width="470" fill="#006200"/><rect y="283" height="1" width="470" fill="#006600"/><rect y="284" height="1" width="470" fill="#006800"/><rect y="285" height="2" width="470" fill="#006900"/><rect y="287" height="1" width="470" fill="#006700"/><rect y="288" height="1" width="470" fill="#006300"/><rect y="289" height="1" width="470" fill="#005f00"/><rect y="290" height="1" width="470" fill="#005a00"/><rect y="291" height="1" width="470" fill="#005500"/><rect y="292" height="1" width="470" fill="#005100"/><rect y="293" height="1" width="470" fill="#004c00"/><rect y="294" height="1" width="470" fill="#004900"/><rect y="295" height="1" width="470" fill="#004600"/><rect y="296" height="1" width="470" fill="#004500"/><rect y="297" height="1" width="470" fill="#004600"/><rect y="298" height="1" width="470" fill="#004800"/><rect y="299" height="1" width="470" fill="#004b00"/><rect y="300" height="1" width="470" fill="#005100"/><rect y="301" height="1" width="470" fill="#005700"/><rect y="302" height="1" width="470" fill="#005f00"/><rect y="303" height="1" width="470" fill="#006800"/><rect y="304" height="1" width="470" fill="#007200"/><rect y="305" height="1" width="470" fill="#007b00"/><rect y="306" height="1" width="470" fill="#008500"/><rect y="307" height="1" width="470" fill="#008e00"/><rect y="308" height="1" width="470" fill="#009600"/><rect y="309" height="1" width="470" fill="#009c00"/><rect y="310" height="1" width="470" fill="#00a100"/><rect y="311" height="1" width="470" fill="#00a300"/><rect y="312" height="1" width="470" fill="#00a400"/><rect y="313" height="1" width="470" fill="#00a200"/><rect y="314" height="1" width="470" fill="#009f00"/><rect y="315" height="1" width="470" fill="#009900"/><rect y="316" height="1" width="470" fill="#009100"/><rect y="317" height="1" width="470" fill="#008700"/><rect y="318" height="1" width="470" fill="#007c00"/><rect y="319" height="1" width="470" fill="#007000"/><rect y="320" height="1" width="470" fill="#006300"/><rect y="321" height="1" width="470" fill="#005700"/><rect y="322" height="1" width="470" fill="#004a00"/><rect y="323" height="1" width="470" fill="#003f00"/><rect y="324" height="1" width="470" fill="#003400"/><rect y="325" height="1" width="470" fill="#002b00"/><rect y="326" height="1" width="470" fill="#002400"/><rect y="327" height="1" width="470" fill="#001f00"/><rect y="328" height="2" width="470" fill="#001c00"/><rect y="330" height="1" width="470" fill="#001d00"/><rect y="331" height="1" width="470" fill="#002100"/><rect y="332" height="1" width="470" fill="#002600"/><rect y="333" height="1" width="470" fill="#002d00"/><rect y="334" height="1" width="470" fill="#003500"/><rect y="335" height="1" width="470" fill="#003e00"/><rect y="336" height="1" width="470" fill="#004700"/><rect y="337" height="1" width="470" fill="#005100"/><rect y="338" height="1" width="470" fill="#005a00"/><rect y="339" height="1" width="470" fill="#006200"/><rect y="340" height="1" width="470" fill="#006900"/><rect y="341" height="1" width="470" fill="#006f00"/><rect y="342" height="1" width="470" fill="#007400"/><rect y="343" height="1" width="470" fill="#007700"/><rect y="344" height="2" width="470" fill="#007900"/><rect y="346" height="1" width="470" fill="#007800"/><rect y="347" height="1" width="470" fill="#007500"/><rect y="348" height="1" width="470" fill="#007200"/><rect y="349" height="1" width="470" fill="#006f00"/><rect y="350" height="1" width="470" fill="#006b00"/><rect y="351" height="1" width="470" fill="#006700"/></g></g></svg></div></div>

<div class="abs" id="tm"><div class="abs stripe"></div><div class="abs body">
<div class="term"><span class="d">2024-03-25T06:31.38 CET</span> <span class="m">DEBUG:</span> <span class="c">Key pressed</span> <span class="p">/home/scip/dev/kageviewer/game.go: 132</span>
    Cursor: 359.00, 267.00
    Flag: 1
    Slider: 0
    Time: "32.03"
<span class="d">2024-03-25T06:31.38 CET</span> <span class="m">DEBUG:</span> <span class="c">Key pressed</span> <span class="p">/home/scip/dev/kageviewer/game.go: 132</span>
    Cursor: 359.00, 267.00
    Flag: 0
    Slider: 0
    Time: "32.82"
<span class="d">2024-03-25T06:31.42 CET</span> <span class="m">DEBUG:</span> <span class="c">Key pressed</span> <span class="p">/home/scip/dev/kageviewer/game.go: 132</span>
    Cursor: 431.00, 261.00
    Flag: 1
    Slider: 0
    Time: "36.63"</div>
<div class="abs tcur"></div>
<div class="abs status"><span class="l">[0] </span><span class="win">1:kageviewer*</span><span class="r"><svg width="12" height="13" viewBox="0 0 12 13" style="vertical-align:top"><path d="M0 7.5H4.2M5.8 7.5H10.6" fill="none" stroke="#dcd8c8" stroke-width="1"/><path d="M3.6 7.6C5.4 7.4 4.6 4.5 7 4.5H8" fill="none" stroke="#dcd8c8" stroke-width="1.1"/><path d="M7.3 2.2L10.8 4.5L7.3 6.8Z" fill="#dcd8c8"/></svg><span class="w">main</span> <span class="g">origin/main</span> <span class="o">-</span> <span class="z">… 3</span> 25.03.2024 18:31:47</span></div>
</div><div class="abs sb"></div></div>
</body></html>
